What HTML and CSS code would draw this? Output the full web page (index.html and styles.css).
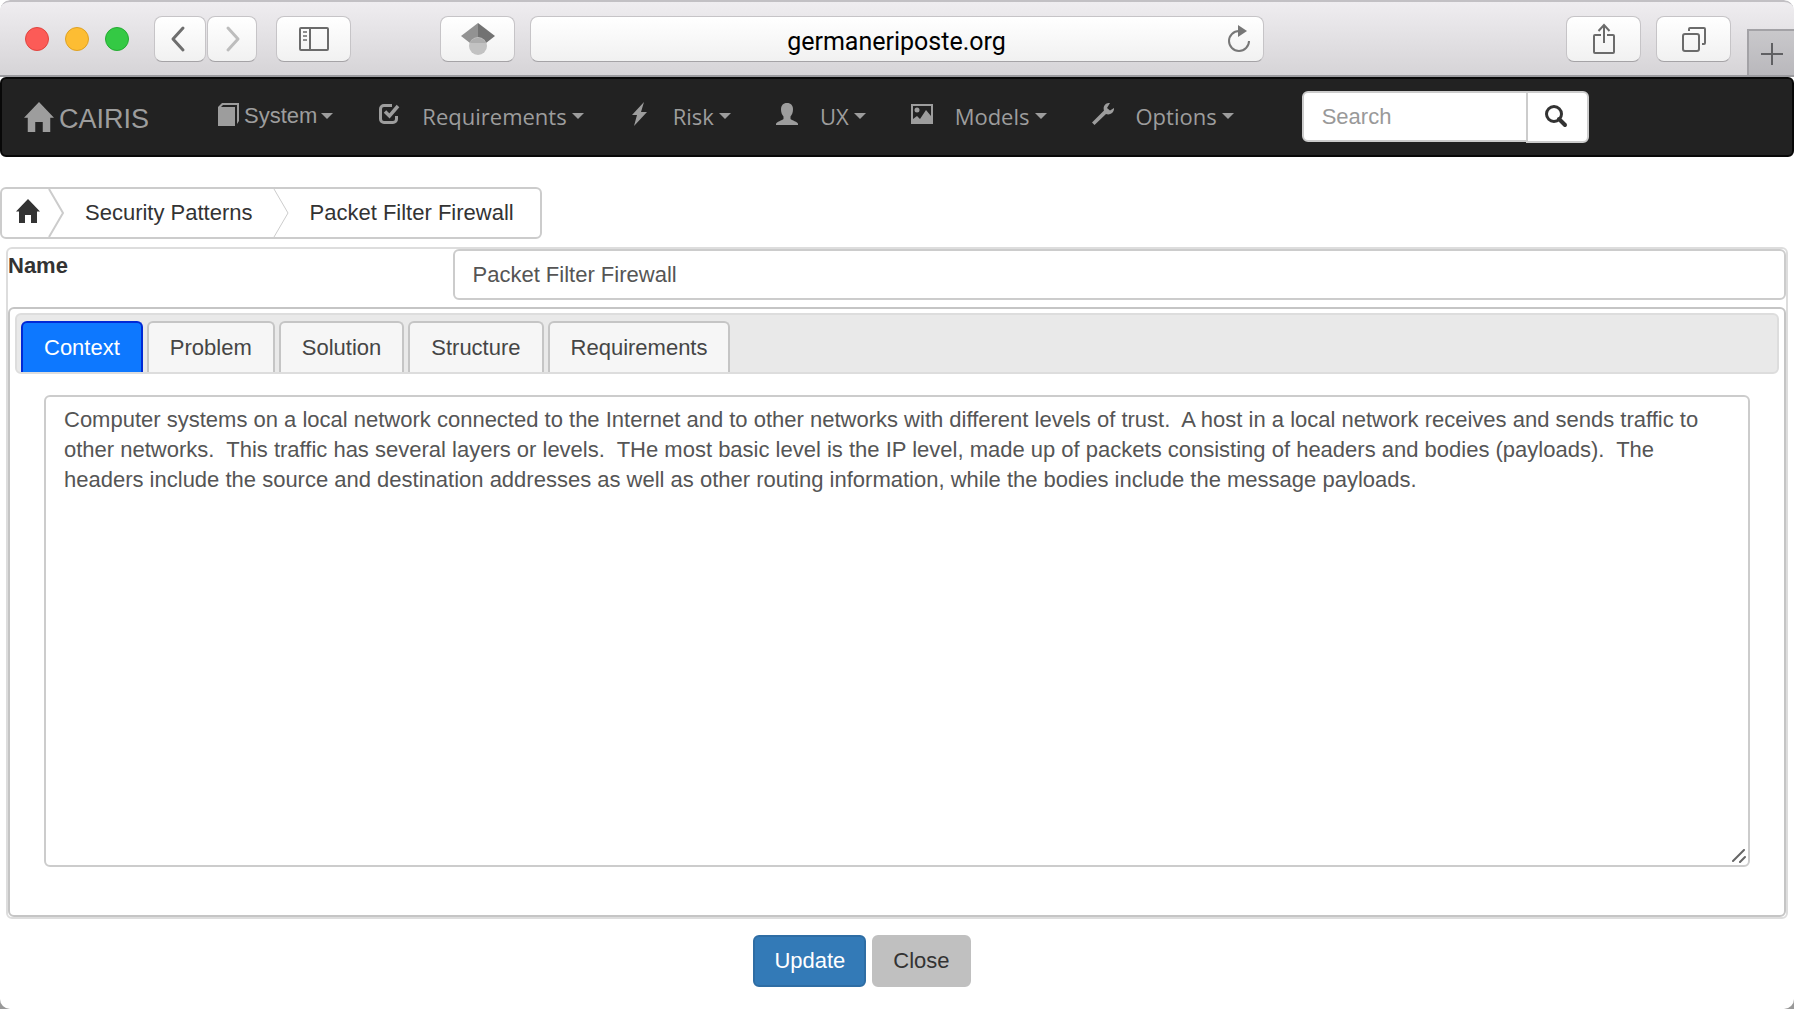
FILE: index.html
```html
<!DOCTYPE html>
<html lang="en">
<head>
<meta charset="utf-8">
<title>CAIRIS</title>
<link rel="stylesheet" href="styles.css">
</head>
<body>
<div class="window">
  <header class="toolbar">
    <div class="lights"><span class="light red"></span><span class="light yellow"></span><span class="light green"></span></div>
    <div class="history">
      <button class="tool back" type="button" aria-label="Back"><svg width="16" height="28" viewBox="0 0 16 28"><path d="M13 3 3 14 13 25" fill="none" stroke="#6e6e6e" stroke-width="3" stroke-linecap="round" stroke-linejoin="round"/></svg></button>
      <button class="tool forward" type="button" aria-label="Forward"><svg width="16" height="28" viewBox="0 0 16 28"><path d="M3 3 13 14 3 25" fill="none" stroke="#bdbdbd" stroke-width="3" stroke-linecap="round" stroke-linejoin="round"/></svg></button>
    </div>
    <button class="tool" type="button" aria-label="Sidebar"><svg width="30" height="24" viewBox="0 0 30 24" fill="none" stroke="#6b6b6b"><rect x="1" y="1" width="28" height="22" rx="1" stroke-width="2"/><path d="M11 1v22" stroke-width="2"/><path d="M4 5h4M4 9h4M4 13h4" stroke-width="1.5"/></svg></button>
    <button class="tool scholar" type="button" aria-label="Scholar"><svg width="34" height="32" viewBox="0 0 34 32"><path d="M17 0v20H9L0 13z" fill="#929292"/><path d="M17 0v20h8l9-7z" fill="#727272"/><circle cx="17" cy="23" r="9" fill="#c2c2c2"/><path d="M9 20a9 9 0 0 1 16 0z" fill="#adadad"/></svg></button>
    <div class="address">
      <input class="url" type="text" value="germaneriposte.org" aria-label="Address">
      <button class="reload" type="button" aria-label="Reload"><svg width="24" height="28" viewBox="0 0 24 28"><path d="M12 6A10 10 0 1 0 22 16" fill="none" stroke="#777" stroke-width="2"/><path d="M11 0v12l9-6z" fill="#777"/></svg></button>
    </div>
    <button class="tool" type="button" aria-label="Share"><svg width="22" height="32" viewBox="0 0 22 32" fill="none" stroke="#6b6b6b" stroke-width="2"><path d="M8 12H2a1 1 0 0 0-1 1v16a1 1 0 0 0 1 1h18a1 1 0 0 0 1-1V13a1 1 0 0 0-1-1h-6M11 20V2M5.500 8 11 2l5.500 6"/></svg></button>
    <button class="tool" type="button" aria-label="Tabs"><svg width="24" height="26" viewBox="0 0 24 26" fill="none" stroke="#6b6b6b" stroke-width="2"><rect x="1" y="8" width="16" height="17" rx="2"/><path d="M7 5V3a1 1 0 0 1 1-1h14a1 1 0 0 1 1 1v14a1 1 0 0 1-1 1h-2"/></svg></button>
    <button class="newtab" type="button" aria-label="New tab"><svg width="22" height="22" viewBox="0 0 22 22"><path d="M11 0v22M0 11h22" stroke="#606063" stroke-width="2"/></svg></button>
  </header>

  <nav class="navbar">
    <a class="brand" href="#"><svg width="30" height="30" viewBox="0 0 24 24" fill="currentColor"><path d="M12 0 24 12.500h-3V24h-6v-8H9v8H3V12.500H0z"/></svg><span class="brand-name">CAIRIS</span></a>
    <ul class="menu">
      <li><a class="item system" href="#"><svg width="21" height="23" viewBox="0 0 21 23"><path d="M0 4 4 0h17v18l-2 3V2H5L3 4h14v19H0z" fill="currentColor"/></svg>System<span class="caret"></span></a></li>
      <li><a class="item" href="#"><svg width="22" height="22" viewBox="0 0 22 22" fill="none" stroke="currentColor" stroke-width="3"><path d="M14 2.500H6A3.500 3.500 0 0 0 2.500 6v10A3.500 3.500 0 0 0 6 19.500h9a3.500 3.500 0 0 0 3.500-3.500v-3"/><path d="M7 8.500 11.500 13 20 3" stroke-width="3.500"/></svg>Requirements<span class="caret"></span></a></li>
      <li><a class="item" href="#"><svg width="22" height="24" viewBox="0 0 22 24"><path d="M15 0 3 13h5L5 24 18 10h-6z" fill="currentColor"/></svg>Risk<span class="caret"></span></a></li>
      <li><a class="item" href="#"><svg width="22" height="22" viewBox="0 0 22 22"><path d="M11 0c4 0 6 2.500 6 6.500 0 3-1 5-2.500 7V16c1 1.500 7.500 2.500 7.500 5v1H0v-1c0-2.500 6.500-3.500 7.500-5v-2.500C6 11.500 5 9.500 5 6.500 5 2.500 7 0 11 0z" fill="currentColor"/></svg>UX<span class="caret"></span></a></li>
      <li><a class="item" href="#"><svg width="22" height="20" viewBox="0 0 22 20"><path d="M0 0h22v20H0zM2 2v13l4-3 3 3 6-9 5 6V2z" fill="currentColor" fill-rule="evenodd"/><circle cx="6" cy="6" r="2.500" fill="currentColor"/></svg>Models<span class="caret"></span></a></li>
      <li><a class="item" href="#"><svg width="22" height="22" viewBox="0 0 22 22"><path d="M18 0c-4-.5-7.500 3-6 7.500L0 19.500 2.500 22 14 11c4 1.500 8.500-1.500 8-6l-4 2.500-3-2.500z" fill="currentColor"/></svg>Options<span class="caret"></span></a></li>
    </ul>
    <form class="search">
      <input class="search-box" type="text" placeholder="Search" aria-label="Search">
      <button class="search-go" type="button" aria-label="Go"><svg width="24" height="24" viewBox="0 0 24 24" fill="none" stroke="#333" stroke-width="3"><circle cx="10" cy="10" r="7.500"/><path d="m15 15 6 6" stroke-width="4" stroke-linecap="round"/></svg></button>
    </form>
  </nav>

  <main class="content">
    <nav class="crumbs" aria-label="Breadcrumb">
      <a class="crumb home" href="#" aria-label="Home"><svg width="24" height="24" viewBox="0 0 24 24" fill="#333"><path d="M12 0 24 12.500h-3V24h-6v-8H9v8H3V12.500H0z"/></svg></a>
      <svg class="chevron" width="16" height="48" viewBox="0 0 16 48"><path d="M1 0 15 24 1 48" fill="none" stroke="#ccc" stroke-width="2"/></svg>
      <a class="crumb" href="#">Security Patterns</a>
      <svg class="chevron" width="16" height="48" viewBox="0 0 16 48"><path d="M1 0 15 24 1 48" fill="none" stroke="#ccc"/></svg>
      <a class="crumb" href="#">Packet Filter Firewall</a>
    </nav>

    <form class="pattern">
      <div class="panel">
        <div class="name-row">
          <label class="name-label" for="name">Name</label>
          <input class="name-box" id="name" type="text" value="Packet Filter Firewall">
        </div>
        <div class="tabs">
          <div class="tab-list" role="tablist">
            <button class="tab active" type="button" role="tab">Context</button>
            <button class="tab" type="button" role="tab">Problem</button>
            <button class="tab" type="button" role="tab">Solution</button>
            <button class="tab" type="button" role="tab">Structure</button>
            <button class="tab" type="button" role="tab">Requirements</button>
          </div>
          <div class="tab-panel">
            <textarea class="context" rows="15" aria-label="Context">Computer systems on a local network connected to the Internet and to other networks with different levels of trust.  A host in a local network receives and sends traffic to other networks.  This traffic has several layers or levels.  THe most basic level is the IP level, made up of packets consisting of headers and bodies (payloads).  The headers include the source and destination addresses as well as other routing information, while the bodies include the message payloads.</textarea>
            <svg class="grip" width="14" height="14" viewBox="0 0 14 14" stroke="#666" stroke-width="2" stroke-linecap="round"><path d="M1 12 12 1M8 13l5-5"/></svg>
          </div>
        </div>
      </div>
      <div class="actions">
        <button class="btn primary" type="button">Update</button>
        <button class="btn" type="button">Close</button>
      </div>
    </form>
  </main>
</div>
</body>
</html>
```

FILE: styles.css
```css
*, *::before, *::after { box-sizing: border-box; }
html { background: linear-gradient(#fff 50%, #999 50%); }
body { margin: 0; font: 22px/30px "Liberation Sans", Arial, sans-serif; color: #333; }
button, input, textarea { font: inherit; color: inherit; margin: 0; }
a { color: inherit; text-decoration: none; }
svg { display: block; flex: none; }

.window { min-height: 100vh; border-radius: 10px; overflow: hidden; background: #fff; }

/* Browser toolbar */
.toolbar {
  display: flex; align-items: flex-start; height: 77px; padding: 14px 0 0 25px;
  border-top: 2px solid #c2c0c4; border-bottom: 2px solid #9b9b9f; border-radius: 10px 10px 0 0;
  background: linear-gradient(#efedf0, #d6d4d7);
}
.lights { display: flex; gap: 16px; padding-top: 11px; margin-right: 25px; }
.light { width: 24px; height: 24px; border-radius: 50%; border: 1px solid; }
.red { background: #fc5b57; border-color: #e0443e; }
.yellow { background: #fdbd33; border-color: #dea123; }
.green { background: #34c944; border-color: #24ab32; }
.history { display: flex; gap: 1px; margin-right: 19px; }
.tool {
  display: grid; place-items: center; width: 75px; height: 46px; padding: 0;
  border: 1px solid #c6c4c7; border-bottom-color: #a5a3a6; border-radius: 8px;
  background: linear-gradient(#fff, #f1f1f1);
}
.back { width: 52px; padding-right: 5px; }
.forward { width: 50px; padding-left: 2px; }
.scholar { margin: 0 15px 0 89px; }
.address {
  display: flex; align-items: center; flex: 1; height: 46px; margin-right: 302px; padding: 0 12px 0 35px;
  border: 1px solid #c6c4c7; border-bottom-color: #a5a3a6; border-radius: 8px;
  background: linear-gradient(#fff, #f1f1f1);
}
.url {
  flex: 1; min-width: 0; height: 44px; padding: 4px 0 0; border: 0; background: none;
  color: #000; text-align: center; font: 25px/30px Roboto, sans-serif;
}
.reload { padding: 0; border: 0; background: none; }
.address + .tool { margin-right: 15px; }
.newtab {
  display: grid; place-items: center; width: 47px; height: 46px; margin: 13px 0 0 16px; padding: 2px 0 0;
  border: solid #a3a2a6; border-width: 2px 0 0 2px; background: linear-gradient(#c9c8cb, #b9b8bc);
}

/* Application menu */
.navbar {
  display: flex; align-items: center; min-height: 80px; padding: 0 22px;
  border: 2px solid #080808; border-radius: 6px; background: #222; color: #9d9d9d;
}
.brand { display: flex; align-items: center; gap: 5px; width: 194px; font-size: 27px; }
.brand-name { padding-top: 4px; }
.menu { display: flex; gap: 45px; margin: 0; padding: 0; list-style: none; }
.item { display: flex; align-items: center; gap: 22px; padding-bottom: 2px; font-family: "Open Sans", sans-serif; }
.item svg { margin-bottom: 4px; }
.system { gap: 5px; padding-bottom: 0; font-family: inherit; }
.caret { border: 6px solid transparent; border-top-color: currentColor; border-bottom: 0; margin-left: -17px; }
.system .caret { margin-left: -1px; }
.search { display: flex; margin-left: 68px; }
.search-box {
  width: 226px; height: 51px; padding: 0 18px; border: 2px solid #ccc; border-radius: 6px 0 0 6px; background: #fff;
}
.search-box::placeholder { color: #999; opacity: 1; }
.search-go {
  display: grid; place-items: center; width: 63px; height: 52px; margin-left: -2px; padding: 0 2px 3px 0;
  border: 2px solid #ccc; border-radius: 0 6px 6px 0; background: #fff;
}

/* Breadcrumb */
.content { padding-top: 30px; }
.crumbs { display: inline-flex; vertical-align: top; height: 52px; border: 2px solid #ccc; border-radius: 6px; }
.crumb { display: flex; align-items: center; padding: 0 20px 0 21px; }
.crumb:last-child { padding-right: 26px; }
.home { padding: 0 8px 4px 14px; }

/* Pattern form */
.pattern { margin-top: 8px; padding: 0 6px; }
.panel { border: 2px solid #ddd; border-radius: 6px; }
.name-row { display: flex; align-items: flex-start; padding-bottom: 7px; }
.name-label { width: 25%; padding-top: 2px; font-weight: bold; }
.name-box {
  flex: 1; min-width: 0; height: 51px; padding: 0 18px; border: 2px solid #ccc; border-radius: 6px;
  background: #fff; color: #555;
}
.tabs { padding: 4px 5px; border: 2px solid #c5c5c5; border-radius: 6px; }
.tab-list {
  display: flex; gap: 4px; padding: 6px 4px 0; border: 2px solid #ddd; border-radius: 6px; background: #e9e9e9;
}
.tab {
  height: 51px; padding: 0 21px; border: 2px solid #c5c5c5; border-bottom: 0; border-radius: 6px 6px 0 0;
  background: #f6f6f6; color: #454545;
}
.active { border-color: #0029d6; background: #0d78ff; color: #fff; }
.tab-panel { position: relative; padding: 21px 29px 44px; }
.context {
  display: block; width: 100%; padding: 8px 18px 10px; border: 2px solid #ccc; border-radius: 6px;
  background: #fff; color: #555; resize: none;
}
.grip { position: absolute; right: 33px; bottom: 48px; }
.actions { display: flex; justify-content: center; gap: 6px; padding: 16px 70px 22px 0; }
.btn { height: 52px; padding: 0 19px; border: 2px solid #c0c0c0; border-radius: 6px; background: #c0c0c0; }
.primary { border-color: #2e6da4; background: #337ab7; color: #fff; }
```
